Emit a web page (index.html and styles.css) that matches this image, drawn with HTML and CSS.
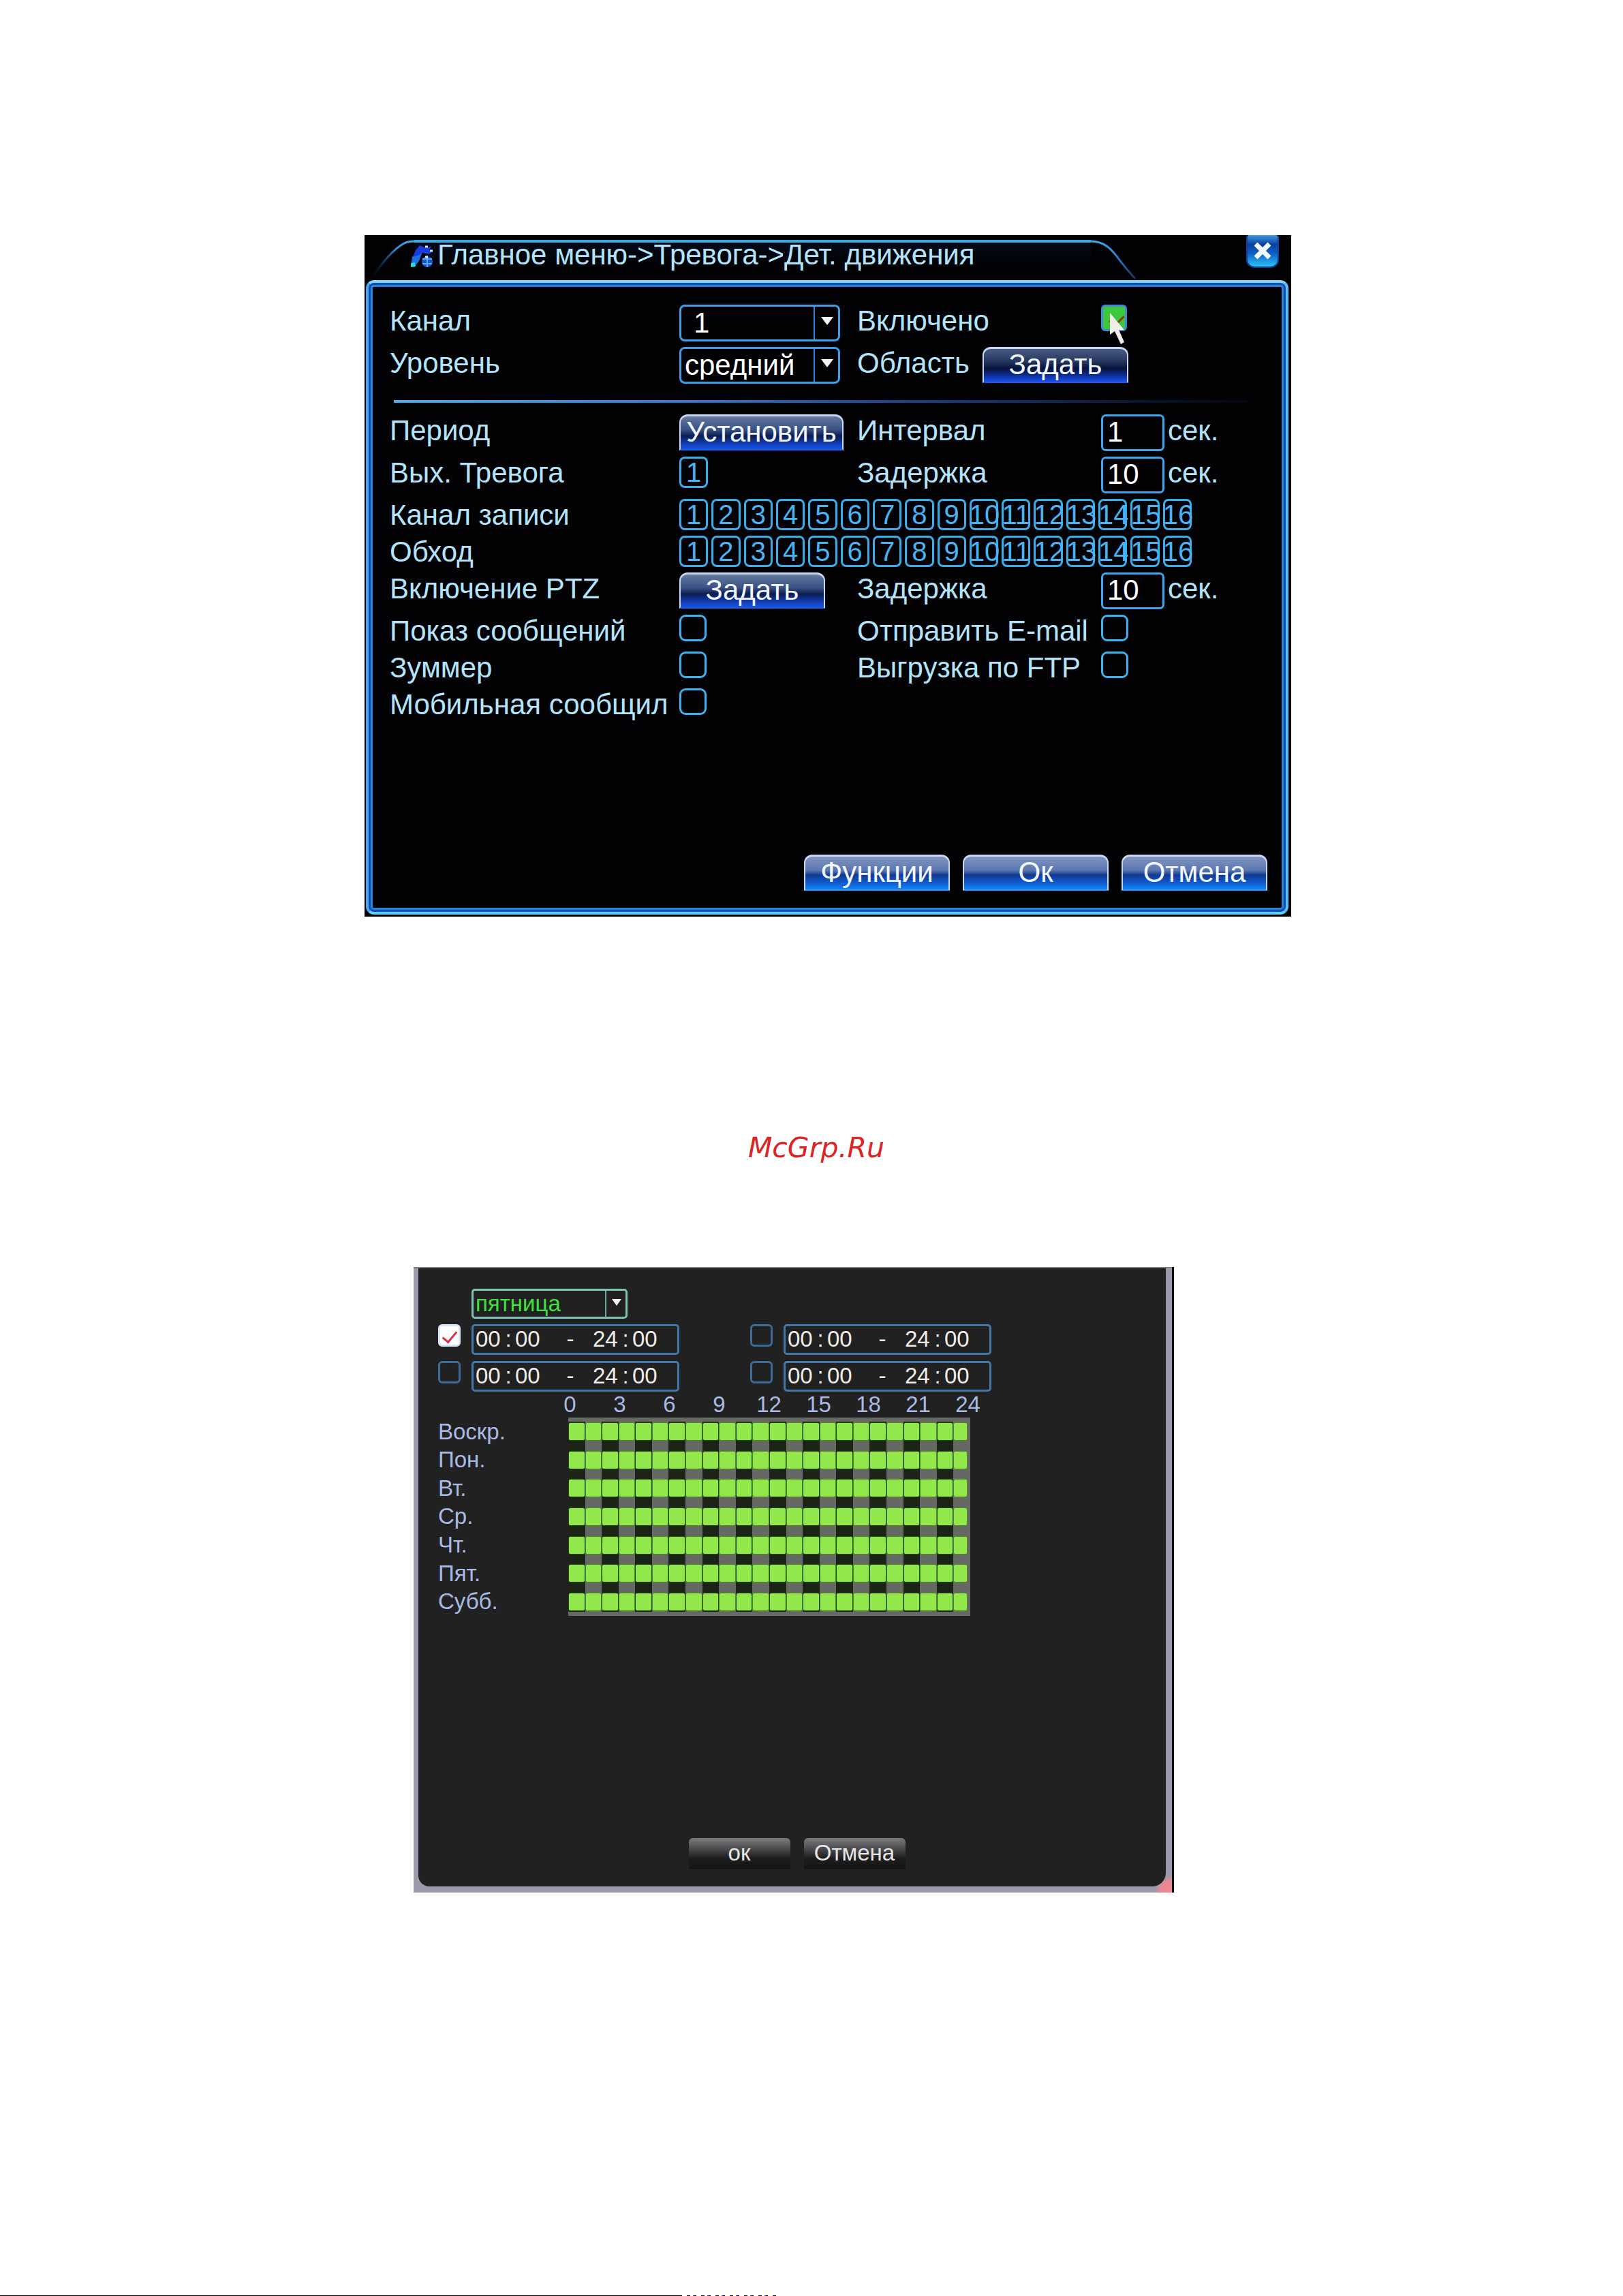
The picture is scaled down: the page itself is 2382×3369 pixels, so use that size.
FILE: index.html
```html
<!DOCTYPE html>
<html lang="ru">
<head>
<meta charset="utf-8">
<title>Детектор движения</title>
<link rel="stylesheet" href="styles.css">
</head>
<body>
<main class="sheet">

<section class="motion" aria-label="Дет. движения">
  <header class="titlebar">
    <svg class="tab-left" width="63" height="58" viewBox="0 0 63 58" aria-hidden="true">
      <defs><linearGradient id="fadeL" x1="0" y1="1" x2="1" y2="0"><stop offset="0" stop-color="#0a2c60" stop-opacity="0"/><stop offset=".7" stop-color="#3a8fd8"/><stop offset="1" stop-color="#3fb0ea"/></linearGradient></defs>
      <path d="M1 56C14 36 32 14 48 5Q54 2 63 2" fill="none" stroke="url(#fadeL)" stroke-width="3"/>
    </svg>
    <h1 class="title">
      <svg class="title-icon" width="34" height="34" viewBox="0 0 34 34" aria-hidden="true">
        <path d="M8 8L14 1L24 5L31 2L28 8L33 10L28 14L18 12L14 17L8 20L4 18Z" fill="#1b3be0"/>
        <path d="M3 18L11 16L17 13L13 24L6 33L1 32Z" fill="#1f6ee8"/>
        <path d="M1 27L7 26L8 32L1 33Z" fill="#19e0c8"/>
        <circle cx="25" cy="25" r="8" fill="#1d55c8"/>
        <path d="M25 16V33M18 21H32M18 28H32" stroke="#58a8f8" stroke-width="2"/>
        <path d="M22 3H26M29 9H33M22 18H26" stroke="#d8ecff" stroke-width="3"/>
      </svg>
      <span>Главное меню-&gt;Тревога-&gt;Дет. движения</span>
    </h1>
    <svg class="tab-right" width="66" height="58" viewBox="0 0 66 58" aria-hidden="true">
      <defs><linearGradient id="fadeR" x1="0" y1="0" x2="1" y2="1"><stop offset="0" stop-color="#3fb0ea"/><stop offset=".5" stop-color="#2f7fd0"/><stop offset="1" stop-color="#16305c"/></linearGradient></defs>
      <path d="M0 2C20 2 30 14 38 24Q48 38 65 57" fill="none" stroke="url(#fadeR)" stroke-width="3"/>
    </svg>
    <button type="button" class="close" aria-label="Закрыть">
      <svg width="26" height="26" viewBox="0 0 26 26"><path d="M3 3L23 23M23 3L3 23" stroke="#f2f6ff" stroke-width="7"/></svg>
    </button>
  </header>

  <form class="frame">
    <div class="fields fields-top">
      <label for="channel">Канал</label>
      <div class="select"><select id="channel" class="spaced"><option>1</option></select></div>
      <label for="enabled">Включено</label>
      <div class="pointed">
        <input type="checkbox" id="enabled" checked>
        <svg class="cursor" width="23" height="48" viewBox="0 0 23 48" aria-hidden="true"><path d="M1 1V33L8 28L17 47L22 44L14 26H22Z" fill="#f0ece8"/></svg>
      </div>

      <label for="level">Уровень</label>
      <div class="select"><select id="level"><option>средний</option></select></div>
      <div class="area wide">
        <span>Область</span>
        <button type="button" class="btn">Задать</button>
      </div>
    </div>

    <hr class="divider">

    <div class="fields fields-main">
      <span>Период</span>
      <button type="button" class="btn btn-wide">Установить</button>
      <label for="interval">Интервал</label>
      <div class="seconds"><input type="text" id="interval" value="1"><span>сек.</span></div>

      <span>Вых. Тревога</span>
      <div class="boxes boxes-single"><button type="button">1</button></div>
      <label for="delay">Задержка</label>
      <div class="seconds"><input type="text" id="delay" value="10"><span>сек.</span></div>

      <span>Канал записи</span>
      <div class="boxes wide3">
        <button type="button">1</button><button type="button">2</button><button type="button">3</button><button type="button">4</button><button type="button">5</button><button type="button">6</button><button type="button">7</button><button type="button">8</button><button type="button">9</button><button type="button">10</button><button type="button">11</button><button type="button">12</button><button type="button">13</button><button type="button">14</button><button type="button">15</button><button type="button">16</button>
      </div>

      <span>Обход</span>
      <div class="boxes wide3">
        <button type="button">1</button><button type="button">2</button><button type="button">3</button><button type="button">4</button><button type="button">5</button><button type="button">6</button><button type="button">7</button><button type="button">8</button><button type="button">9</button><button type="button">10</button><button type="button">11</button><button type="button">12</button><button type="button">13</button><button type="button">14</button><button type="button">15</button><button type="button">16</button>
      </div>

      <span>Включение PTZ</span>
      <button type="button" class="btn btn-mid">Задать</button>
      <label for="ptz-delay">Задержка</label>
      <div class="seconds"><input type="text" id="ptz-delay" value="10"><span>сек.</span></div>

      <label for="show">Показ сообщений</label>
      <input type="checkbox" id="show">
      <label for="email">Отправить E-mail</label>
      <input type="checkbox" id="email">

      <label for="buzzer">Зуммер</label>
      <input type="checkbox" id="buzzer">
      <label for="ftp">Выгрузка по FTP</label>
      <input type="checkbox" id="ftp">

      <label for="mobile">Мобильная сообщил</label>
      <input type="checkbox" id="mobile">
    </div>

    <div class="actions">
      <button type="button" class="btn btn-bright">Функции</button>
      <button type="button" class="btn btn-bright">Ок</button>
      <button type="button" class="btn btn-bright">Отмена</button>
    </div>
  </form>
</section>

<p class="watermark">McGrp.Ru</p>

<section class="schedule" aria-label="Период">
  <form class="panel">
    <div class="day-select"><select aria-label="День недели"><option>пятница</option></select></div>

    <div class="ranges">
      <input type="checkbox" aria-label="Период 1" checked>
      <div class="range"><input type="text" value="00" aria-label="Часы"><span>:</span><input type="text" value="00" aria-label="Минуты"><span class="dash">-</span><input type="text" value="24" aria-label="Часы"><span>:</span><input type="text" value="00" aria-label="Минуты"></div>
      <input type="checkbox" aria-label="Период 2">
      <div class="range"><input type="text" value="00" aria-label="Часы"><span>:</span><input type="text" value="00" aria-label="Минуты"><span class="dash">-</span><input type="text" value="24" aria-label="Часы"><span>:</span><input type="text" value="00" aria-label="Минуты"></div>
      <input type="checkbox" aria-label="Период 3">
      <div class="range"><input type="text" value="00" aria-label="Часы"><span>:</span><input type="text" value="00" aria-label="Минуты"><span class="dash">-</span><input type="text" value="24" aria-label="Часы"><span>:</span><input type="text" value="00" aria-label="Минуты"></div>
      <input type="checkbox" aria-label="Период 4">
      <div class="range"><input type="text" value="00" aria-label="Часы"><span>:</span><input type="text" value="00" aria-label="Минуты"><span class="dash">-</span><input type="text" value="24" aria-label="Часы"><span>:</span><input type="text" value="00" aria-label="Минуты"></div>
    </div>

    <div class="hours"><span>0</span><span>3</span><span>6</span><span>9</span><span>12</span><span>15</span><span>18</span><span>21</span><span>24</span></div>

    <table class="week">
      <tbody>
        <tr><th scope="row">Воскр.</th></tr>
        <tr><th scope="row">Пон.</th></tr>
        <tr><th scope="row">Вт.</th></tr>
        <tr><th scope="row">Ср.</th></tr>
        <tr><th scope="row">Чт.</th></tr>
        <tr><th scope="row">Пят.</th></tr>
        <tr><th scope="row">Субб.</th></tr>
      </tbody>
    </table>

    <div class="panel-actions">
      <button type="button">ок</button>
      <button type="button">Отмена</button>
    </div>
  </form>
</section>

<div class="edge"></div>
</main>
<script src="week.js"></script>
</body>
</html>
```
FILE: styles.css
```css
* { box-sizing: border-box; }

body {
  margin: 0;
  background: #fff;
  font-family: "Liberation Sans", Arial, sans-serif;
}

button, input, select { font: inherit; margin: 0; }

.sheet {
  min-height: 100vh;
  padding-top: 345px;
  display: flex;
  flex-direction: column;
  align-items: center;
}

/* Motion detection dialog */

.motion {
  width: 100%;
  max-width: 1360px;
  margin-left: 48px;
  padding: 0 4px 3px 2px;
  background: #020205;
  color: #b4e4fa;
  font-size: 42px;
  line-height: 48px;
}

.motion label, .motion span { white-space: nowrap; }

.titlebar {
  display: flex;
  height: 66px;
  padding: 0 14px 0 8px;
}

.tab-left, .tab-right { margin-top: 7px; flex: none; }

.title {
  flex: 1;
  display: flex;
  gap: 6px;
  height: 58px;
  margin: 7px 0 0;
  border-top: 4px solid #3aa6e0;
  font-size: 42px;
  font-weight: normal;
  line-height: 36px;
  background: linear-gradient(#030a18, #020205 60%);
}

.title-icon { flex: none; margin: 3px 0 0 -6px; }

.close {
  width: 48px;
  height: 48px;
  margin-left: 162px;
  padding: 0;
  display: flex;
  align-items: center;
  justify-content: center;
  border: 2px solid #0d3f9c;
  border-top: 0;
  border-radius: 4px 4px 12px 12px;
  background: linear-gradient(#3f9be0, #0b3f9e 30%, #0f62c8 60%, #2cc4f6);
}

.frame {
  padding: 32px 27px 30px 31px;
  border: 4px solid #5cc0f8;
  border-color: #86d2f8 #5cc0f8 #63cdf7 #48a8ee;
  border-radius: 12px;
  box-shadow: inset 0 0 0 3px #0b50b8, inset 0 0 0 6px #2c80d8;
  display: flex;
  flex-direction: column;
}

.fields {
  display: grid;
  grid-template-columns: 425px 261px 358px 1fr;
  row-gap: 8px;
  align-items: start;
  justify-items: start;
}

.fields-top { grid-template-rows: 54px 54px; }
.fields-main { grid-template-rows: 54px 54px 46px 46px 54px 46px 46px 46px; }
.wide { grid-column: span 2; }
.wide3 { grid-column: span 3; }

.select {
  position: relative;
  width: 236px;
  height: 54px;
  border: 3px solid #3d9fe8;
  border-radius: 8px;
}

.select select {
  width: 100%;
  height: 100%;
  padding: 0 0 3px 5px;
  border: 0;
  appearance: none;
  background: transparent;
  color: #fff;
}

.select .spaced { padding-left: 18px; }

.select::before, .day-select::before {
  content: "";
  position: absolute;
  top: 0;
  bottom: 0;
  right: 34px;
  width: 2px;
  background: #3d86d8;
}

.select::after, .day-select::after {
  content: "";
  position: absolute;
  top: 15px;
  right: 7px;
  border: 9px solid transparent;
  border-top: 12px solid #f4f4f4;
  border-bottom: 0;
}

input[type="checkbox"] {
  appearance: none;
  display: block;
  width: 40px;
  height: 39px;
  border: 3px solid #3cb2ee;
  border-radius: 9px;
}

.pointed { position: relative; }

.pointed input:checked {
  width: 38px;
  border-color: #3f8ad0;
  border-radius: 6px;
  background: #3cc83c;
}

.pointed::after {
  content: "";
  position: absolute;
  left: 17px;
  top: 11px;
  width: 9px;
  height: 18px;
  border: solid #8a3a10;
  border-width: 0 3px 3px 0;
  rotate: 45deg;
}

.cursor {
  position: absolute;
  left: 12px;
  top: 11px;
  z-index: 1;
}

.area { display: flex; }
.area span { width: 184px; }

.btn {
  width: 214px;
  height: 53px;
  padding: 0 0 2px;
  border: 2px solid #c8d8f4;
  border-width: 3px 2px 2px;
  border-bottom-color: #1a60e0;
  border-radius: 12px 12px 0 0;
  background: linear-gradient(#4a5c84, #22345c 40%, #08123a 60%, #0c2c98 80%, #1850e4);
  color: #f2f6ff;
  line-height: 46px;
}

.btn-wide { width: 241px; }

.btn-wide, .btn-mid {
  background: linear-gradient(#64799e, #3a5284 40%, #0c1c50 60%, #1038a8 80%, #1a54e4);
}

.btn-bright {
  border-bottom-color: #2a98f8;
  background: linear-gradient(#8496c0, #5a76b0 42%, #123a90 56%, #0f58cc 78%, #1484f4);
}

.divider {
  width: 1252px;
  max-width: 100%;
  height: 4px;
  margin: 24px 0 17px 6px;
  border: 0;
  background: linear-gradient(90deg, #4aaef0, #2f78cc 35%, #1c3f88 62%, #0a1228 90%, #050810);
}

.seconds { display: flex; gap: 5px; }

.seconds input {
  width: 93px;
  height: 54px;
  padding: 0 6px 2px;
  border: 3px solid #3da6f0;
  border-radius: 7px;
  background: transparent;
  color: #fff;
}

.boxes {
  display: grid;
  grid-template-columns: repeat(16, 1fr);
  gap: 5px;
  width: 752px;
}

.boxes-single {
  grid-template-columns: 1fr;
  width: 42px;
}

.boxes button {
  min-width: 0;
  height: 46px;
  padding: 0;
  border: 0;
  border-radius: 8px;
  box-shadow: inset 0 0 0 3px #38aeea;
  background: transparent;
  color: #48b4f4;
  font-size: 40px;
  line-height: 44px;
}

.actions {
  display: flex;
  justify-content: flex-end;
  gap: 19px;
  margin-top: 198px;
  padding-bottom: 1px;
}

.watermark {
  margin: 314px 0 0 14px;
  font: italic 41px/50px "DejaVu Sans", sans-serif;
  color: #dc2424;
}

/* Weekly schedule dialog */

.schedule {
  width: 100%;
  max-width: 1116px;
  margin: 150px 52px 0 0;
  padding: 2px 9px 9px 7px;
  border-right: 3px solid #050510;
  background: radial-gradient(circle at 100% 100%, #ee8890 16px, transparent 26px), linear-gradient(#7c7c80 2px, #9b99ab 2px);
  color: #a9bbe4;
  font-size: 33px;
  line-height: 36px;
}

.panel {
  padding: 30px 29px 25px;
  border-radius: 0 0 20px 16px;
  background: #212121;
}

.day-select {
  position: relative;
  width: 229px;
  height: 44px;
  margin: 0 0 8px 49px;
  border: 3px solid #7cc4b4;
  border-radius: 5px;
}

.day-select::before { right: 28px; background: #6aa89c; }
.day-select::after { top: 12px; right: 6px; border-width: 10px 7px 0; }

.day-select select {
  width: 100%;
  height: 100%;
  padding: 0 0 0 3px;
  border: 0;
  appearance: none;
  background: transparent;
  color: #3fe03f;
}

.ranges {
  display: grid;
  grid-template-columns: 49px 409px 49px 305px;
  row-gap: 9px;
}

.ranges input[type="checkbox"] {
  width: 33px;
  height: 33px;
  border-color: #3b6c98;
  border-radius: 6px;
}

.ranges input[type="checkbox"]:checked {
  border-color: #d8e4f8;
  background: #fff;
  display: grid;
  place-items: center;
}

.ranges input[type="checkbox"]:checked::after {
  content: "";
  width: 9px;
  height: 18px;
  border: solid #d83048;
  border-width: 0 3px 3px 0;
  rotate: 40deg;
}

.range {
  display: flex;
  align-items: center;
  width: 305px;
  height: 45px;
  padding: 0 0 1px 3px;
  border: 3px solid #4279a8;
  border-radius: 5px;
  color: #f0ece6;
}

.range input {
  width: 38px;
  height: 36px;
  padding: 0;
  border: 0;
  background: transparent;
  color: inherit;
}

.range span { width: 20px; text-align: center; }
.range .dash { width: 76px; padding-left: 10px; }

.hours {
  display: grid;
  grid-template-columns: repeat(9, 73px);
  margin: 1px 0 1px 157px;
  text-align: center;
}

.week {
  width: 781px;
  height: 291px;
  table-layout: fixed;
  border-collapse: separate;
  border-spacing: 0;
}

.week th {
  width: 191px;
  padding: 0;
  font-weight: normal;
  text-align: left;
}

.week td { padding: 0; background: #666864; }
.week td:nth-child(even) { background: #1c2418; }
.week td:last-child { border-right: 4px solid #666864; }
.week tr:first-child td { box-shadow: inset 0 6px #666864; }
.week tr:last-child td { box-shadow: inset 0 -6px #666864; }

.week i {
  display: block;
  height: 27px;
  border: 1px solid #4c8a24;
  border-radius: 3px;
  background: #92e84a;
}

.week td:nth-child(even) i { border-color: #1c4a10; }

.panel-actions {
  display: flex;
  justify-content: center;
  gap: 20px;
  margin-top: 326px;
  padding-left: 14px;
}

.panel-actions button {
  width: 149px;
  height: 46px;
  padding: 0 0 2px;
  border: 0;
  border-radius: 6px 6px 2px 2px;
  background: linear-gradient(#7c7c80, #4a4a4c 35%, #1c1c1c 65%, #141414);
  color: #e4e4e4;
}

/* Dark rule along the bottom of the sheet */

.edge {
  align-self: stretch;
  height: 1px;
  margin-top: auto;
  background:
    linear-gradient(90deg, #000 42%, transparent 42%),
    linear-gradient(90deg, transparent 48%, #fff 48%),
    repeating-linear-gradient(90deg, #111 0 5px, #fff 5px 9px, #33c 9px 11px, #000 11px 14px, #fff 14px 21px);
}
```
FILE: week.js
```js
document.querySelectorAll(".week tr").forEach(function (row) {
  for (var hour = 0; hour < 24; hour++) {
    row.insertCell().appendChild(document.createElement("i"));
  }
});
```
